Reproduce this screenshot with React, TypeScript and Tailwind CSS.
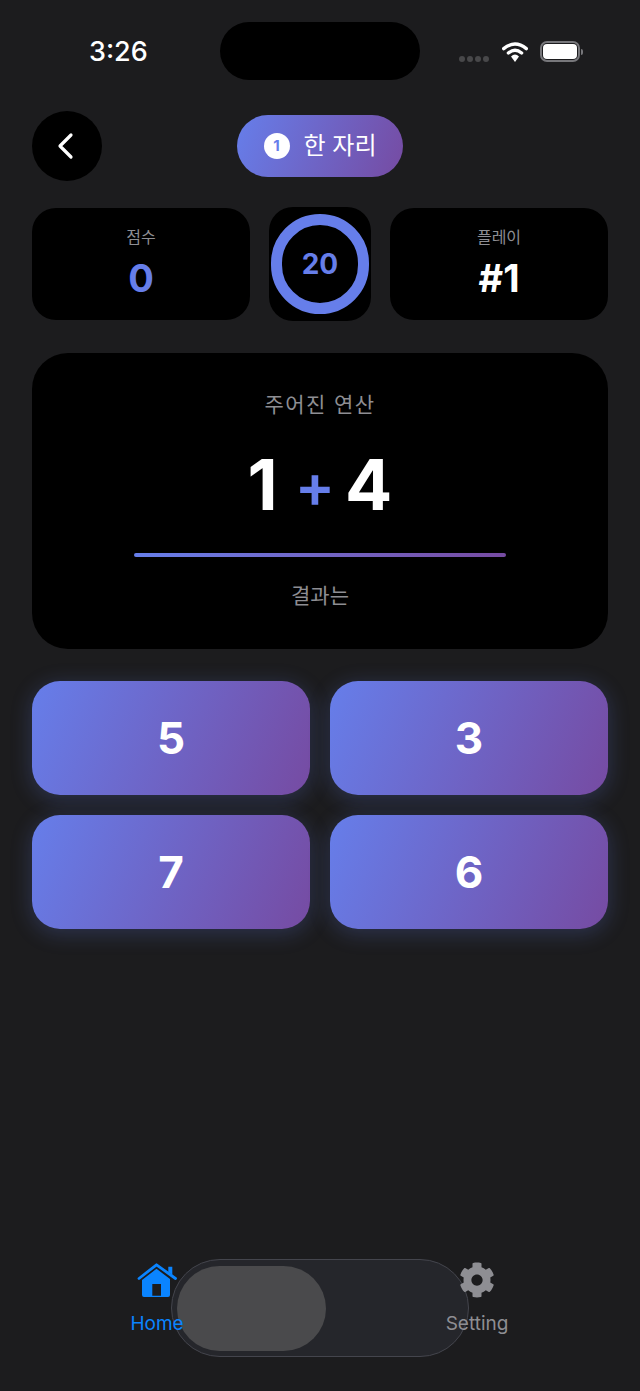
import { FaCog } from "react-icons/fa";

const sans = "font-['Inter','Noto_Sans_CJK_KR',sans-serif]";

const StatusBar = () => (
  <div className="flex h-[58px] items-center mt-[22px] pl-[89px] relative">
    <span className="text-[27px] leading-none font-medium text-white w-[131px] shrink-0 mt-[1px]">3:26</span>
    <div className="w-[200px] h-[58px] shrink-0 rounded-[29px] bg-black" />
    <div className="flex items-center ml-[39px] shrink-0">
      <div className="flex gap-[2px] mt-[15px]">
        <span className="w-[6px] h-[6px] rounded-full bg-[#48484a]" />
        <span className="w-[6px] h-[6px] rounded-full bg-[#48484a]" />
        <span className="w-[6px] h-[6px] rounded-full bg-[#48484a]" />
        <span className="w-[6px] h-[6px] rounded-full bg-[#48484a]" />
      </div>
      <svg width="26" height="20" viewBox="0 0 26 20" className="ml-[13px] mt-[2px]" fill="none">
        <path d="M1.7 6.6 Q13 -2.4 24.3 6.6" stroke="#fff" strokeWidth="3.4" strokeLinecap="round" />
        <path d="M6.4 11 Q13 5.6 19.6 11" stroke="#fff" strokeWidth="3.4" strokeLinecap="round" />
        <path d="M9 14.4 Q13 10.8 17 14.4 L13 20 Z" fill="#fff" />
      </svg>
      <div className="w-[40px] h-[21px] ml-[12px] rounded-[7px] border-2 border-[#77777b] p-[1px] mt-[1px] shrink-0">
        <div className="w-full h-full rounded-[4px] bg-white" />
      </div>
      <div className="w-[2px] h-[6px] rounded-r-full bg-[#77777b] ml-[1px] mt-[1px]" />
    </div>
  </div>
);

const Stat = ({ label, value, className }: { label: string; value: string; className: string }) => (
  <div className="w-[218px] h-[112px] rounded-[24px] bg-black flex flex-col items-center pt-[17px]">
    <span className="text-[16px] leading-[24px] text-[#8e8e93]">{label}</span>
    <span className={`mt-[6px] text-[38px] leading-[46px] font-bold ${className}`}>{value}</span>
  </div>
);

const Answer = ({ n }: { n: number }) => (
  <button className="h-[114px] rounded-[28px] bg-[linear-gradient(112deg,#667eea,#764ba2)] shadow-[0_4px_20px_2px_rgba(102,126,234,0.22)] flex items-center justify-center text-[44px] font-bold text-white">
    {n}
  </button>
);

export default function App() {
  return (
    <div className={`${sans} w-[640px] h-[1391px] bg-[#1c1c1e] flex flex-col relative overflow-hidden`}>
      <StatusBar />

      <div className="flex items-center mt-[31px] px-[32px] relative">
        <button className="w-[70px] h-[70px] rounded-full bg-black flex items-center justify-center">
          <svg width="20" height="30" viewBox="0 0 20 30" fill="none" className="-ml-[5px]">
            <path d="M16 4 L5 15 L16 26" stroke="#fff" strokeWidth="3.2" strokeLinecap="round" strokeLinejoin="round" />
          </svg>
        </button>
        <div className="ml-[135px] w-[166px] h-[62px] rounded-full bg-[linear-gradient(110deg,#667eea,#764ba2)] flex items-center justify-center gap-[14px]">
          <span className="w-[26px] h-[26px] rounded-full bg-white flex items-center justify-center text-[15px] font-bold text-[#667eea]">1</span>
          <span className="text-[24px] leading-none text-white">한 자리</span>
        </div>
      </div>

      <div className="flex items-center justify-between mt-[26px] px-[32px]">
        <Stat label="점수" value="0" className="text-[#667eea]" />
        <div className="w-[102px] h-[114px] rounded-[24px] bg-black flex items-center justify-center">
          <div className="w-[98px] h-[100px] rounded-full border-[11px] border-[#667eea] flex items-center justify-center text-[28px] font-bold text-[#667eea]">
            20
          </div>
        </div>
        <Stat label="플레이" value="#1" className="text-white" />
      </div>

      <div className="mx-[32px] mt-[32px] h-[296px] rounded-[36px] bg-black flex flex-col items-center pt-[36px]">
        <span className="text-[21px] leading-[30px] tracking-[1.4px] mt-[1px] text-[#8e8e93]">주어진 연산</span>
        <div className="flex items-center justify-center mt-[22px] h-[86px] text-[70px] leading-none font-bold text-white">
          <span>1</span>
          <span className="ml-[17px] mr-[10px] text-[60px] font-semibold text-[#667eea]">+</span>
          <span>4</span>
        </div>
        <div className="w-[372px] h-[4px] mt-[25px] rounded-full bg-gradient-to-r from-[#667eea] to-[#764ba2]" />
        <span className="mt-[24px] text-[21px] leading-[30px] text-[#8e8e93]">결과는</span>
      </div>

      <div className="grid grid-cols-2 gap-[20px] mx-[32px] mt-[32px]">
        <Answer n={5} />
        <Answer n={3} />
        <Answer n={7} />
        <Answer n={6} />
      </div>

      <div className="mt-auto mb-[54px] pl-[97px] pr-[103px] flex justify-between relative">
        {/* the sliding pill sits behind the two tabs */}
        <div className="absolute left-[171px] top-[-3px] w-[298px] h-[98px] rounded-full bg-[#25262b] border border-[#44454d] pl-[5px] pt-[6px]">
          <div className="w-[149px] h-[85px] rounded-full bg-[#4a4a4c]" />
        </div>
        <div className="w-[120px] flex flex-col items-center relative">
          <svg width="40" height="36" viewBox="0 0 40 36" fill="#0a84ff">
            <path d="M5 18 L19.5 6.8 L33 17 V33 a2 2 0 0 1 -2 2 H7 a2 2 0 0 1 -2 -2 Z M15.3 22 V33.7 H24 V22 Z" fillRule="evenodd" />
            <path d="M2 16.5 L19.5 2.8 L38.5 16.5" fill="none" stroke="#0a84ff" strokeWidth="2.8" strokeLinecap="round" strokeLinejoin="round" />
            <path d="M31.3 4.7 H35.3 V13 L31.3 10 Z" />
          </svg>
          <span className="mt-[12px] text-[19px] leading-[27px] text-[#0a84ff]">Home</span>
        </div>
        <div className="w-[120px] flex flex-col items-center relative">
          <FaCog className="w-[36px] h-[36px] text-[#8e8e93]" />
          <span className="mt-[12px] text-[19px] leading-[27px] text-[#8e8e93]">Setting</span>
        </div>
      </div>
    </div>
  );
}
